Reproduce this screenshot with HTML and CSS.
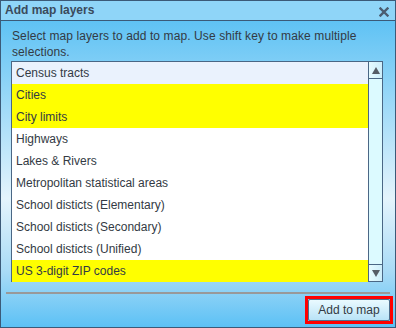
FILE: index.html
```html
<!DOCTYPE html>
<html>
<head>
	<title>Add map layers</title>
	<link rel="stylesheet" href="styles.css">
</head>
<body>
	<div class="dialog">
		<div class="titlebar">
			<span class="title">Add map layers</span>
			<svg class="close" width="10" height="10" viewBox="0 0 10 10">
				<path d="M1.5 1.5 L8.5 8.5 M8.5 1.5 L1.5 8.5" stroke="#4b5d70" stroke-width="2.4" stroke-linecap="square"/>
			</svg>
		</div>
		<div class="content">
			<div class="hint">Select map layers to add to map. Use shift key to make multiple selections.</div>
			<div class="listbox">
				<div class="items">
					<div class="item focused">Census tracts</div>
					<div class="item selected">Cities</div>
					<div class="item selected">City limits</div>
					<div class="item">Highways</div>
					<div class="item">Lakes &amp; Rivers</div>
					<div class="item">Metropolitan statistical areas</div>
					<div class="item">School disticts (Elementary)</div>
					<div class="item">School disticts (Secondary)</div>
					<div class="item">School disticts (Unified)</div>
					<div class="item selected">US 3-digit ZIP codes</div>
				</div>
				<div class="scrollbar">
					<div class="arrow up">
						<svg width="8" height="7" viewBox="0 0 8 7"><path d="M4 0 L8 7 L0 7 Z" fill="#555d66"/></svg>
					</div>
					<div class="track"></div>
					<div class="arrow down">
						<svg width="8" height="7" viewBox="0 0 8 7"><path d="M0 0 L8 0 L4 7 Z" fill="#555d66"/></svg>
					</div>
				</div>
			</div>
			<div class="footer">
				<div class="highlight">
					<button class="btn">Add to map</button>
				</div>
			</div>
		</div>
	</div>
</body>
</html>
```

FILE: styles.css
```css
*{
	box-sizing: border-box;
}

html, body{
	margin: 0px;
	width: 396px;
	height: 328px;
	font-family: "Liberation Sans", Arial, sans-serif;
	font-size: 12px;
	color: #333a44;
}

.dialog{
	width: 396px;
	height: 328px;
	border: 1px solid #3b5a78;
	display: flex;
	flex-direction: column;
}

.titlebar{
	height: 20px;
	flex: 0 0 20px;
	background-color: #8fd5f8;
	border-bottom: 1px solid #3b5a78;
	display: flex;
	align-items: center;
	justify-content: space-between;
	padding: 0 6px 0 4px;
}

.title{
	font-weight: bold;
	color: #3a4a5c;
	line-height: 19px;
}

.close{
	margin-top: 2px;
}

.content{
	flex: 1;
	display: flex;
	flex-direction: column;
	background: linear-gradient(#5fc2f4 0%, #e4f4fc 58%, #a8dbf6 82%, #5cc1f5 100%);
	padding: 6px 0 0 0;
}

.hint{
	line-height: 16px;
	padding: 1px 8px 0 11px;
	height: 32px;
	letter-spacing: 0.1px;
}

.listbox{
	margin: 2px 12px 0 10px;
	height: 221px;
	border: 1px solid #4a6785;
	background-color: #fff;
	display: flex;
}

.items{
	flex: 1;
}

.item{
	height: 22px;
	line-height: 22px;
	padding-left: 4px;
	white-space: nowrap;
}

.item.focused{
	background-color: #eaf2fd;
}

.item.selected{
	background-color: #ffff00;
}

.scrollbar{
	width: 14px;
	border-left: 1px solid #4a6785;
	background-color: #dcfaff;
	display: flex;
	flex-direction: column;
}

.arrow{
	height: 17px;
	display: flex;
	align-items: center;
	justify-content: center;
	background: linear-gradient(90deg, #e6fbff, #cdeefa);
}

.arrow.up{
	border-bottom: 1px solid #4a6785;
}

.arrow.down{
	border-top: 1px solid #4a6785;
}

.track{
	flex: 1;
}

.footer{
	margin: 10px 5px 0 5px;
	border-top: 2px solid #999;
	display: flex;
	justify-content: flex-end;
	padding-top: 2px;
}

.highlight{
	border: 3px solid #ff0000;
	width: 88px;
	height: 28px;
	margin-right: -3px;
}

.btn{
	width: 100%;
	height: 100%;
	margin: 0;
	border: 1px solid #4f6f8d;
	border-radius: 2px;
	background: linear-gradient(#eafaff, #b9e3f7);
	font-family: "Liberation Sans", Arial, sans-serif;
	font-size: 12px;
	color: #333a44;
	padding: 0;
}
```
